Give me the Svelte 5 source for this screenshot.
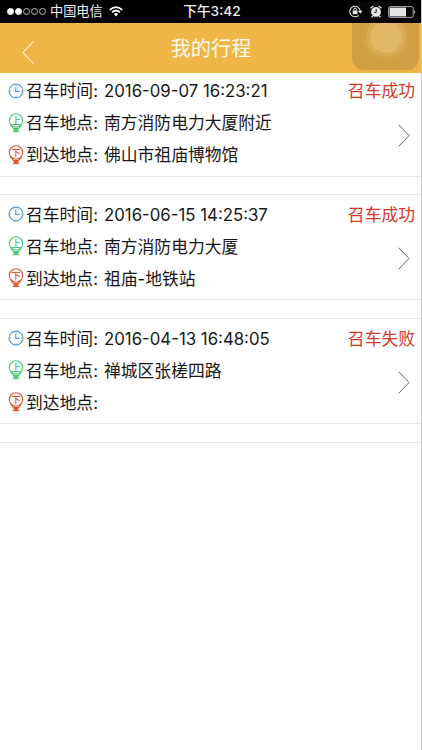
<script lang="ts">
    interface Trip {
        time: string;
        from: string;
        to: string;
        ok: boolean;
    }

    const trips: Trip[] = [
        { time: '2016-09-07 16:23:21', from: '南方消防电力大厦附近', to: '佛山市祖庙博物馆', ok: true },
        { time: '2016-06-15 14:25:37', from: '南方消防电力大厦', to: '祖庙-地铁站', ok: true },
        { time: '2016-04-13 16:48:05', from: '禅城区张槎四路', to: '', ok: false },
    ];

    const signal = [true, true, false, false, false];
</script>

{#snippet pin(label: string, kind: string)}
    <svg class="icon {kind}" width="16" height="20" viewBox="0 0 16 20">
        <circle cx="8" cy="7.5" r="6.7" fill="none" stroke="currentColor" stroke-width="1.1" />
        <path d="M2.6 11.6 L6.8 17.4 H9.2 L13.4 11.6" fill="none" stroke="currentColor" stroke-width="1.1" />
        <path d="M5.8 15 H10.2 L9.4 18 H6.6Z" fill="currentColor" />
        <path d="M4.8 18.5 H11.2" stroke="currentColor" stroke-width="1.3" />
        <text x="8" y="11" text-anchor="middle" fill="currentColor">{label}</text>
    </svg>
{/snippet}

<div class="page">
    <div class="status">
        <div class="carrier">
            <span class="dots">
                {#each signal as on}
                    <i class:on></i>
                {/each}
            </span>
            <span class="operator">中国电信</span>
            <svg width="14" height="11" viewBox="0 0 14 11" fill="none" stroke="#fff" stroke-width="1.7">
                <path d="M0.8 3.9 Q7 -1.7 13.2 3.9" />
                <path d="M3 6.3 Q7 2.7 11 6.3" />
                <path d="M4.8 8 Q7 6.2 9.2 8 L7 10.4Z" fill="#fff" stroke="none" />
            </svg>
        </div>
        <span class="clock">下午3:42</span>
        <div class="indicators">
            <svg width="14" height="13" viewBox="0 0 14 13" fill="none" stroke="#e4e4e4">
                <path d="M9.6 10.3 A5.2 5.2 0 1 1 11.2 6" stroke-width="1.1" />
                <path d="M9 5.8 H13.6 L11.3 8.7Z" fill="#e4e4e4" stroke="none" />
                <path d="M4.7 5.6 V4.6 A1.4 1.4 0 0 1 7.5 4.6 V5.6" stroke-width="1" />
                <rect x="3.7" y="5.5" width="4.8" height="3.7" fill="#e4e4e4" stroke="none" />
            </svg>
            <svg class="alarm" width="12" height="13" viewBox="0 0 12 13">
                <circle cx="6" cy="7" r="4.9" fill="#e8e8e8" />
                <path d="M0.6 3.3 L3.2 1 M11.4 3.3 L8.8 1 M2.7 11 L1.7 12.3 M9.3 11 L10.3 12.3" stroke="#e8e8e8" stroke-width="1.4" />
                <path d="M6.2 4 V7.4 H4" stroke="#222" fill="none" />
            </svg>
            <svg width="28" height="12" viewBox="0 0 28 12">
                <rect x="0.6" y="0.6" width="24.6" height="10.8" rx="1.8" fill="none" stroke="#aaa" stroke-width="1" />
                <rect x="1.6" y="1.6" width="16.4" height="8.8" fill="#e4e4e4" />
                <path d="M26.2 4 Q28.4 6 26.2 8Z" fill="#bbb" />
            </svg>
        </div>
    </div>

    <header>
        <svg class="back" width="12" height="23" viewBox="0 0 12 23">
            <path d="M11.3 0.7 L0.9 11.5 L11.3 22.3" fill="none" stroke="#fff2cf" stroke-width="1.1" />
        </svg>
        <h1>我的行程</h1>
    </header>

    <main>
        {#each trips as trip}
            <section class="trip">
                <div class="row">
                    <svg class="icon time" width="16" height="16" viewBox="0 0 16 16" fill="none" stroke="currentColor">
                        <circle cx="8" cy="8" r="6.9" stroke-width="1.2" />
                        <path d="M7.8 3.8 V8.4 H11.6" stroke-width="1.2" />
                        <path d="M8 1.5 V2.9 M8 13.1 V14.5 M1.5 8 H2.9 M13.1 8 H14.5" stroke-width="0.8" />
                    </svg>
                    <span class="label">召车时间:</span>
                    <span>{trip.time}</span>
                    <span class="state">{trip.ok ? '召车成功' : '召车失败'}</span>
                </div>
                <div class="row">
                    {@render pin('上', 'up')}
                    <span class="label">召车地点:</span>
                    <span>{trip.from}</span>
                </div>
                <div class="row">
                    {@render pin('下', 'down')}
                    <span class="label">到达地点:</span>
                    <span>{trip.to}</span>
                </div>
                <svg class="more" width="12" height="23" viewBox="0 0 12 23">
                    <path d="M0.7 0.7 L11 11.5 L0.7 22.3" fill="none" stroke="#666" stroke-width="1" />
                </svg>
            </section>
        {/each}
        <div class="end"></div>
    </main>

    <div class="assist">
        <i></i>
    </div>
</div>

<style>
    :global(body) {
        background: #fff;
    }

    .page {
        position: relative;
        box-sizing: border-box;
        width: 422px;
        height: 750px;
        overflow: hidden;
        border-right: 1px solid #c9c9c9;
        background: #fff;
        color: #161616;
        font-family: Inter, "Noto Sans CJK SC", sans-serif;
    }

    .status {
        display: grid;
        grid-template-columns: 1fr auto 1fr;
        align-items: center;
        height: 23px;
        margin-right: -1px;
        background: #000;
        color: #f2f2f2;
        font-size: 13.2px;
        line-height: 23px;
    }

    .carrier {
        display: flex;
        align-items: center;
        padding-left: 7px;
    }

    .dots {
        display: flex;
        gap: 1px;
    }

    .dots i {
        box-sizing: border-box;
        width: 7px;
        height: 7px;
        border: 1px solid #bbb;
        border-radius: 50%;
    }

    .dots i.on {
        border-color: #fff;
        background: #fff;
    }

    .operator {
        margin: 0 6px 0 4px;
    }

    .clock {
        padding-left: 2px;
        font-size: 13.7px;
        font-weight: 500;
    }

    .indicators {
        position: relative;
        z-index: 2;
        display: flex;
        align-items: center;
        justify-content: flex-end;
        padding-right: 6px;
    }

    .alarm {
        margin: 0 6px 0 7px;
    }

    header {
        display: grid;
        grid-template-columns: 1fr auto 1fr;
        align-items: center;
        height: 50px;
        background: #efb546;
        color: #fffbea;
    }

    .back {
        margin: 9px 0 0 22px;
    }

    h1 {
        margin: 2px 0 0 1px;
        font-size: 20.2px;
        font-weight: 400;
        line-height: 48px;
    }

    main {
        margin-top: -2.4px;
    }

    .trip {
        position: relative;
        box-sizing: border-box;
        height: 106px;
        margin-bottom: 17.8px;
        padding: 3px 6px 0 8px;
        border-top: 1px solid #e8e8e8;
        border-bottom: 1px solid #e8e8e8;
    }

    .trip:first-child {
        border-top-color: transparent;
    }

    .end {
        border-top: 1px solid #e8e8e8;
    }

    .row {
        display: flex;
        align-items: center;
        height: 32px;
        font-size: 16.8px;
        line-height: 32px;
        white-space: nowrap;
    }

    .row span {
        padding-top: 1px;
    }

    .icon {
        flex: none;
        margin-right: 2px;
    }

    .icon text {
        font-family: "Noto Sans CJK SC", sans-serif;
        font-size: 9.5px;
        font-weight: 500;
    }

    .time {
        color: #5b9bd0;
    }

    .up {
        color: #4bcb74;
    }

    .down {
        color: #e0572f;
    }

    .label {
        width: 78px;
    }

    .state {
        margin-left: auto;
        color: #cf3a2c;
    }

    .more {
        position: absolute;
        right: 11px;
        top: 52px;
    }

    /* floating assistive button */
    .assist {
        position: absolute;
        right: 2px;
        top: 2px;
        display: flex;
        align-items: center;
        justify-content: center;
        width: 67px;
        height: 68px;
        border-radius: 12px;
        background: linear-gradient(rgba(60, 60, 60, 0.1) 21px, rgba(110, 90, 50, 0.24) 21px);
    }

    .assist i {
        width: 32px;
        height: 32px;
        margin-top: 2px;
        border-radius: 50%;
        background: rgba(255, 226, 165, 0.38);
        box-shadow: 0 0 0 4px rgba(255, 226, 165, 0.14), 0 0 0 8px rgba(255, 226, 165, 0.06);
        /* the knob stays dark where it crosses the status bar */
        clip-path: inset(2px -8px -8px -8px);
    }
</style>
